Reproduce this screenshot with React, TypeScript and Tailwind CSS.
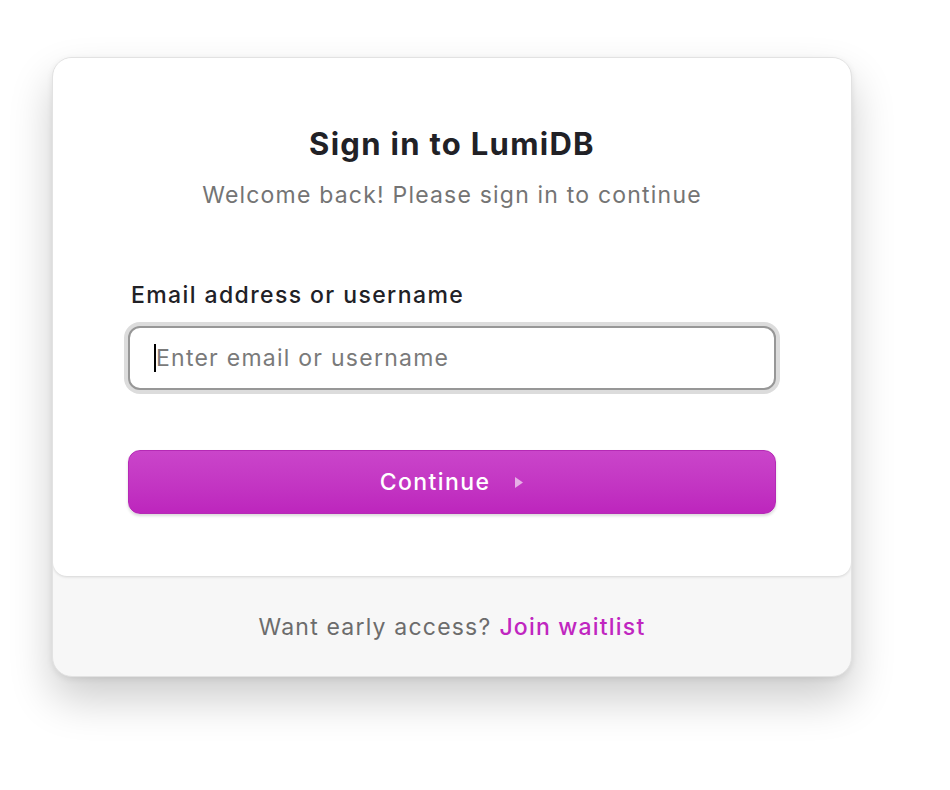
export default function App() {
  return (
    <div className="min-h-screen bg-white pl-[52px] pt-[57px] font-['Inter','Liberation_Sans',sans-serif]">
      <div className="w-[800px] overflow-hidden rounded-[20px] border border-[#e2e2e2] bg-[#f7f7f7] shadow-[0_22px_44px_rgba(0,0,0,0.2),0_2px_6px_rgba(0,0,0,0.08)]">
        {/* Main panel */}
        <div className="rounded-b-[14px] bg-white px-[75px] pb-[62px] pt-[66px] shadow-[0_1px_3px_rgba(0,0,0,0.14)]">
          <h1 className="text-center text-[31px] font-bold leading-[40px] tracking-[1.3px] text-[#212126]">
            Sign in to LumiDB
          </h1>
          <p className="mt-[16px] text-center text-[23px] leading-[30px] tracking-[1.2px] text-[#747474]">
            Welcome back! Please sign in to continue
          </p>

          <label className="mt-[70px] block pl-[3px] text-[23px] font-medium leading-[30px] tracking-[1.4px] text-[#212126]">
            Email address or username
          </label>
          <div className="mt-[16px] flex h-[64px] items-center rounded-[12px] border-2 border-[#979797] bg-white pl-[24px] shadow-[0_0_0_4px_#dcdcdc]">
            <span className="h-[28px] w-[2px] bg-black" />
            <span className="text-[23px] tracking-[1.25px] text-[#7a7a7a]">Enter email or username</span>
          </div>

          <button className="mt-[60px] flex h-[64px] w-full items-center justify-center gap-[24px] rounded-[12px] border border-[#b52ab5] bg-gradient-to-b from-[#ca45ca] to-[#bd25bd] text-[23px] font-medium tracking-[1.4px] text-white shadow-[0_2px_3px_rgba(0,0,0,0.15)]">
            <span>Continue</span>
            <svg width="10" height="13" viewBox="0 0 10 13">
              <path d="M1 1 L9 6.5 L1 12 Z" fill="#ffffff" fillOpacity="0.6" />
            </svg>
          </button>
        </div>

        {/* Footer */}
        <div className="flex h-[100px] items-center justify-center pt-[2px] text-[23px] tracking-[1.2px]">
          <span className="text-[#6c6c6c]">Want early access?</span>
          <a href="#" className="ml-[8px] font-medium text-[#c026c0]">
            Join waitlist
          </a>
        </div>
      </div>
    </div>
  );
}
